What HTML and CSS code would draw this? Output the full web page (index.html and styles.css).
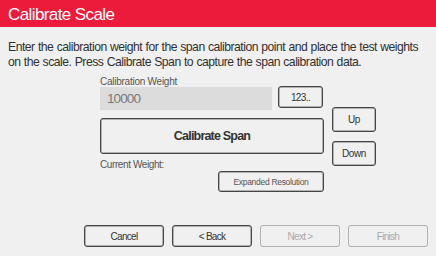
FILE: index.html
```html
<!DOCTYPE html>
<html lang="en">
<head>
    <meta charset="UTF-8">
    <title>Calibrate Scale</title>
    <link rel="stylesheet" href="styles.css">
</head>
<body>
    <div class="header">Calibrate Scale</div>

    <p class="intro">Enter the calibration weight for the span calibration point and place the test weights on the scale. Press Calibrate Span to capture the span calibration data.</p>

    <div class="panel">
        <div class="main-col">
            <div class="field-label">Calibration Weight</div>
            <div class="weight-row">
                <div class="weight-input">10000</div>
                <button class="btn keypad">123..</button>
            </div>
            <button class="btn calibrate">Calibrate Span</button>
            <div class="current-label">Current Weight:</div>
            <button class="btn expanded">Expanded Resolution</button>
        </div>
        <div class="side-col">
            <button class="btn nudge">Up</button>
            <button class="btn nudge">Down</button>
        </div>
    </div>

    <div class="footer">
        <button class="btn nav">Cancel</button>
        <button class="btn nav">&lt; Back</button>
        <button class="btn nav" disabled>Next &gt;</button>
        <button class="btn nav" disabled>Finish</button>
    </div>
</body>
</html>
```

FILE: styles.css
```css
body {
    margin: 0;
    width: 436px;
    height: 256px;
    overflow: hidden;
    background-color: #f0f0f0;
    font-family: "Liberation Sans", Arial, sans-serif;
    color: #333;
}
.header {
    height: 27px;
    line-height: 29px;
    padding-left: 8px;
    background-color: #ec1b3b;
    color: white;
    font-size: 17px;
    letter-spacing: -0.6px;
}
.intro {
    margin: 13px 8px 0 8px;
    font-size: 12.2px;
    line-height: 14.5px;
    letter-spacing: -0.5px;
    word-spacing: 0.4px;
    color: #303030;
}
.panel {
    display: grid;
    grid-template-columns: 224px 44px;
    column-gap: 8px;
    margin: 8px 0 0 100px;
}
.main-col {
    display: flex;
    flex-direction: column;
}
.side-col {
    display: flex;
    flex-direction: column;
    gap: 9px;
    padding-top: 30px;
}
.field-label {
    font-size: 10px;
    line-height: 10px;
    letter-spacing: -0.25px;
    color: #555;
}
.weight-row {
    display: flex;
    gap: 6px;
    align-items: flex-start;
}
.weight-input {
    width: 165px;
    height: 23px;
    padding-left: 7px;
    line-height: 24px;
    background-color: #dcdcdc;
    color: #7a7a7a;
    font-size: 13.5px;
    letter-spacing: -0.9px;
}
.btn {
    font-family: "Liberation Sans", Arial, sans-serif;
    background-color: #f0f0f0;
    border: 1px solid #454545;
    border-radius: 3px;
    box-shadow: inset 0 0 0 0.5px #777;
    color: #333;
    padding: 0;
    cursor: pointer;
}
.btn:disabled {
    border-color: #b2b2b2;
    box-shadow: none;
    color: #aaa;
}
.keypad {
    width: 45px;
    height: 22px;
    margin-top: -1px;
    font-size: 10px;
    letter-spacing: -0.6px;
}
.calibrate {
    height: 36px;
    margin-top: 8px;
    font-size: 12.5px;
    font-weight: bold;
    letter-spacing: -0.8px;
}
.current-label {
    margin-top: 4px;
    font-size: 10px;
    line-height: 13px;
    letter-spacing: -0.4px;
    color: #555;
}
.expanded {
    align-self: flex-end;
    width: 106px;
    height: 21px;
    font-size: 8.5px;
    letter-spacing: -0.3px;
    color: #555;
}
.nudge {
    height: 25px;
    font-size: 10px;
    letter-spacing: -0.4px;
}
.footer {
    display: flex;
    justify-content: flex-end;
    gap: 8px;
    margin-top: 33px;
    padding-right: 8px;
}
.nav {
    width: 80px;
    height: 22px;
    font-size: 10px;
    letter-spacing: -0.7px;
}
```
